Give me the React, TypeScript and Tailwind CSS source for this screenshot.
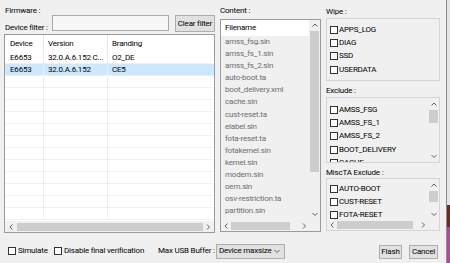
import React from "react";

const files = [
  "amss_fsg.sin",
  "amss_fs_1.sin",
  "amss_fs_2.sin",
  "auto-boot.ta",
  "boot_delivery.xml",
  "cache.sin",
  "cust-reset.ta",
  "elabel.sin",
  "fota-reset.ta",
  "fotakernel.sin",
  "kernel.sin",
  "modem.sin",
  "oem.sin",
  "osv-restriction.ta",
  "partition.sin",
];

const firmwares = [
  { device: "E6653", version: "32.0.A.6.152 C...", branding: "O2_DE", selected: false },
  { device: "E6653", version: "32.0.A.6.152", branding: "CE5", selected: true },
];

type Dir = "up" | "down" | "left" | "right";

function Arrow({ dir }: { dir: Dir }) {
  if (dir === "up" || dir === "down") {
    const pts = dir === "up" ? "0.5,3.5 3,1 5.5,3.5" : "0.5,1 3,3.5 5.5,1";
    return (
      <svg viewBox="0 0 6 4.5" className="w-[6px] h-[4.5px]">
        <polyline points={pts} fill="none" stroke="#606060" strokeWidth="1" />
      </svg>
    );
  }
  const pts = dir === "left" ? "3.5,0.5 1,3 3.5,5.5" : "1,0.5 3.5,3 1,5.5";
  return (
    <svg viewBox="0 0 4.5 6" className="w-[4.5px] h-[6px]">
      <polyline points={pts} fill="none" stroke="#606060" strokeWidth="1" />
    </svg>
  );
}

function Box() {
  return <span className="w-[8px] h-[8px] shrink-0 border border-[#333333] bg-white" />;
}

function CheckRow({ label }: { label: string }) {
  return (
    <div className="h-[13.4px] shrink-0 flex items-center gap-[1px] leading-[12px] whitespace-nowrap">
      <Box />
      <span>{label}</span>
    </div>
  );
}

export default function App() {
  return (
    <div className="w-[450px] h-[263px] flex overflow-hidden bg-[#f0f0f0] text-[8px] tracking-[-0.2px] text-black [font-family:Roboto,'Liberation_Sans',Arial,sans-serif]">
      <div className="w-[447px] h-full flex flex-col border-r border-[#8c8c8c]">
        <div className="h-[234px] flex">
          {/* Firmware */}
          <div className="w-[211px] ml-[4px] flex flex-col">
            <div className="h-[15px] pt-[6px] pl-[1px] leading-[9px]">Firmware :</div>
            <div className="h-[17px] flex">
              <div className="w-[48px] pl-[1px] flex items-end leading-[9px] whitespace-nowrap">Device filter :</div>
              <div className="w-[117px] h-[16px] border border-[#a9a9a9] bg-[#f7f7f7]" />
              <button className="ml-auto w-[40px] h-[17px] border border-[#adadad] bg-[#e1e1e1] leading-[12px] whitespace-nowrap">
                Clear filter
              </button>
            </div>
            <div className="mt-[2px] h-[199px] border border-[#9a9a9a] bg-white flex flex-col">
              <div className="h-[17px] grid grid-cols-[39px_64px_1fr] leading-[17px]">
                <div className="pl-[5px] border-r border-[#e5e5e5]">Device</div>
                <div className="pl-[4px] border-r border-[#e5e5e5]">Version</div>
                <div className="pl-[4px]">Branding</div>
              </div>
              <div className="flex-1 flex flex-col overflow-hidden">
                {Array.from({ length: 14 }).map((_, i) => {
                  const fw = firmwares[i];
                  return (
                    <div
                      key={i}
                      className={
                        "h-[12px] shrink-0 grid grid-cols-[39px_64px_1fr] leading-[12px] border-b border-[#f0f0f0] " +
                        (fw && fw.selected ? "bg-[#cce8ff]" : "")
                      }
                    >
                      <div className="pl-[5px] border-r border-[#e8eef6]">{fw ? fw.device : ""}</div>
                      <div className="pl-[4px] border-r border-[#e8eef6] whitespace-nowrap">{fw ? fw.version : ""}</div>
                      <div className="pl-[4px]">{fw ? fw.branding : ""}</div>
                    </div>
                  );
                })}
              </div>
              <div className="h-[11px] flex items-center bg-[#f0f0f0]">
                <div className="w-[12px] h-full flex items-center justify-center">
                  <Arrow dir="left" />
                </div>
                <div className="flex-1 h-[8px] bg-[#cdcdcd]" />
                <div className="w-[11px] h-full flex items-center justify-center">
                  <Arrow dir="right" />
                </div>
              </div>
            </div>
          </div>

          {/* Content */}
          <div className="w-[101px] ml-[5px] flex flex-col">
            <div className="h-[19px] pt-[6px] leading-[9px]">Content :</div>
            <div className="h-[213px] border border-[#9a9a9a] flex">
              <div className="w-[88px] flex flex-col">
                <div className="h-[16px] bg-white pl-[4px] leading-[16px]">Filename</div>
                <div className="flex-1 bg-[#f0f0f0] flex flex-col overflow-hidden text-[#6d6d6d]">
                  {files.map((f) => (
                    <div key={f} className="h-[12.1px] shrink-0 pl-[4px] leading-[12px] whitespace-nowrap">
                      {f}
                    </div>
                  ))}
                </div>
                <div className="h-[11px] flex items-center bg-[#f0f0f0]">
                  <div className="w-[10px] h-full flex items-center justify-center">
                    <Arrow dir="left" />
                  </div>
                  <div className="w-[59px] h-[8px] bg-[#cdcdcd]" />
                  <div className="flex-1" />
                  <div className="w-[10px] h-full flex items-center justify-center">
                    <Arrow dir="right" />
                  </div>
                </div>
              </div>
              <div className="w-[11px] flex flex-col bg-[#f0f0f0]">
                <div className="h-[11px] flex items-center justify-center">
                  <Arrow dir="up" />
                </div>
                <div className="h-[141px] mx-[1px] bg-[#cdcdcd]" />
                <div className="flex-1" />
                <div className="h-[11px] flex items-center justify-center">
                  <Arrow dir="down" />
                </div>
                <div className="h-[11px]" />
              </div>
            </div>
          </div>

          {/* Wipe / Exclude / MiscTA */}
          <div className="w-[114px] ml-[5px] flex flex-col">
            <div className="h-[18px] pt-[7px] leading-[9px]">Wipe :</div>
            <div className="h-[63px] border border-[#d5d5d5] pt-[4px] pl-[3px] flex flex-col">
              <CheckRow label="APPS_LOG" />
              <CheckRow label="DIAG" />
              <CheckRow label="SSD" />
              <CheckRow label="USERDATA" />
            </div>

            <div className="h-[16px] pt-[5px] leading-[9px]">Exclude :</div>
            <div className="h-[66px] border border-[#d5d5d5] flex">
              <div className="flex-1 pt-[5px] pl-[3px] flex flex-col overflow-hidden">
                <CheckRow label="AMSS_FSG" />
                <CheckRow label="AMSS_FS_1" />
                <CheckRow label="AMSS_FS_2" />
                <CheckRow label="BOOT_DELIVERY" />
                <CheckRow label="CACHE" />
              </div>
              <div className="w-[11px] flex flex-col">
                <div className="h-[12px] flex items-center justify-center">
                  <Arrow dir="up" />
                </div>
                <div className="h-[13px] mx-[1px] bg-[#cdcdcd]" />
                <div className="flex-1" />
                <div className="h-[12px] flex items-center justify-center">
                  <Arrow dir="down" />
                </div>
              </div>
            </div>

            <div className="h-[15px] pt-[5px] leading-[9px] whitespace-nowrap">MiscTA Exclude :</div>
            <div className="h-[53px] border border-[#d5d5d5] flex">
              <div className="flex-1 flex flex-col">
                <div className="flex-1 pt-[3px] pl-[3px] flex flex-col overflow-hidden">
                  <CheckRow label="AUTO-BOOT" />
                  <CheckRow label="CUST-RESET" />
                  <CheckRow label="FOTA-RESET" />
                </div>
                <div className="h-[10px] flex items-center">
                  <div className="w-[10px] h-full flex items-center justify-center">
                    <Arrow dir="left" />
                  </div>
                  <div className="w-[76px] h-[8px] bg-[#cdcdcd]" />
                  <div className="flex-1" />
                  <div className="w-[10px] h-full flex items-center justify-center">
                    <Arrow dir="right" />
                  </div>
                </div>
              </div>
              <div className="w-[11px] flex flex-col">
                <div className="h-[12px] flex items-center justify-center">
                  <Arrow dir="up" />
                </div>
                <div className="h-[11px] mx-[1px] bg-[#cdcdcd]" />
                <div className="flex-1" />
                <div className="h-[11px] flex items-center justify-center">
                  <Arrow dir="down" />
                </div>
                <div className="h-[10px]" />
              </div>
            </div>
          </div>
        </div>

        {/* Bottom bar */}
        <div className="flex-1 pt-[5px] flex items-center whitespace-nowrap leading-[12px]">
          <div className="w-[46px] ml-[8px] flex items-center gap-[2px]">
            <Box />
            <span>Simulate</span>
          </div>
          <div className="w-[104px] flex items-center gap-[2px]">
            <Box />
            <span>Disable final verification</span>
          </div>
          <div className="w-[58px]">Max USB Buffer :</div>
          <div className="w-[69px] h-[15px] border border-[#adadad] bg-[#e1e1e1] flex items-center pl-[2px] pr-[4px]">
            <span>Device maxsize</span>
            <span className="ml-auto">
              <Arrow dir="down" />
            </span>
          </div>
          <button className="ml-auto mt-[2px] w-[23px] h-[14px] border border-[#adadad] bg-[#e1e1e1] leading-[12px]">
            Flash
          </button>
          <button className="ml-[7px] mr-[8px] mt-[2px] w-[29px] h-[14px] border border-[#adadad] bg-[#e1e1e1] leading-[12px]">
            Cancel
          </button>
        </div>
      </div>
      <div className="w-[3px] h-full flex flex-col">
        <div className="h-[205px] bg-[#e4e4e4]" />
        <div className="h-[22px] bg-[#6e2a1e]" />
        <div className="flex-1 bg-[#b4489e]" />
      </div>
    </div>
  );
}
